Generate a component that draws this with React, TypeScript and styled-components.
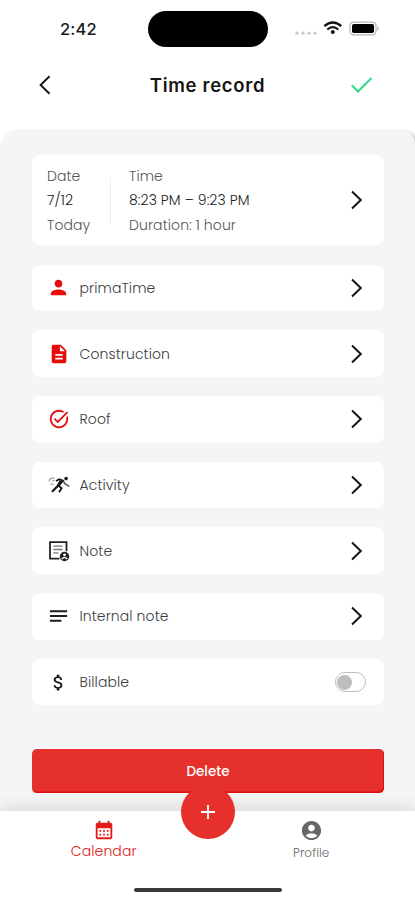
import React from 'react';
import styled, { createGlobalStyle } from 'styled-components';
import {
  MdAccountCircle,
  MdAttachMoney,
  MdCalendarMonth,
  MdDescription,
  MdNotes,
  MdPerson,
  MdTaskAlt,
} from 'react-icons/md';

const GlobalStyle = createGlobalStyle`
  * { box-sizing: border-box; }
  body { margin: 0; background: #fff; }
  button { font: inherit; border: 0; padding: 0; background: none; }
`;

const Screen = styled.div`
  width: 415px;
  height: 900px;
  display: flex;
  flex-direction: column;
  overflow: hidden;
  background: #fff;
  color: #4a4a4a;
  font-family: Poppins, Inter, sans-serif;
  font-size: 14px;
  font-weight: 300;
  letter-spacing: 0.1px;
`;

const StatusBar = styled.div`
  height: 58px;
  flex: none;
  display: grid;
  grid-template-columns: 148px 120px 1fr;
  align-items: center;
`;

const Clock = styled.span`
  padding-left: 60px;
  font-family: Inter, sans-serif;
  font-size: 16.5px;
  font-weight: 500;
  letter-spacing: 0.2px;
  color: #1a1a1a;
`;

const Island = styled.div`
  height: 36px;
  border-radius: 18px;
  background: #000;
`;

const StatusIcons = styled.div`
  display: flex;
  padding-left: 26px;
`;

const Header = styled.header`
  height: 71px;
  flex: none;
  display: grid;
  grid-template-columns: 90px 1fr 90px;
  align-items: start;
  padding-top: 14px;
`;

const HeaderButton = styled.button<{ $left: number }>`
  height: 26px;
  padding-left: ${(p) => p.$left}px;
  display: flex;
  align-items: center;
`;

const Title = styled.h1`
  margin: 0;
  text-align: center;
  font-family: Inter, sans-serif;
  font-size: 18.5px;
  line-height: 27px;
  font-weight: 600;
  letter-spacing: 0.7px;
  color: #151515;
  white-space: nowrap;
`;

const Panel = styled.main`
  height: 682px;
  flex: none;
  padding: 26px 31px 0 32px;
  border-radius: 20px 15px 0 0;
  background: #f5f5f5;
  box-shadow: 4px 4px 5px rgba(0, 0, 0, 0.35);
  clip-path: inset(0 0 0 0);
`;

const Card = styled.section`
  border-radius: 8px;
  background: #fff;
  display: flex;
  align-items: center;
`;

const DateCard = styled(Card)`
  height: 90px;
  padding: 0 19px 0 15px;
  margin-bottom: 19.5px;
`;

const Column = styled.div<{ $width?: number }>`
  width: ${(p) => (p.$width ? `${p.$width}px` : 'auto')};
  padding-top: 1px;
  line-height: 24.3px;
  white-space: nowrap;
`;

const Divider = styled.div`
  width: 1px;
  height: 47px;
  margin-right: 18px;
  background: #ededed;
`;

const Line = styled.div<{ $strong?: boolean }>`
  color: ${(p) => (p.$strong ? '#222' : '#555')};
`;

const Rows = styled.div`
  display: flex;
  flex-direction: column;
  gap: 18.9px;
`;

const Row = styled(Card)`
  height: 46.8px;
  padding: 0 19px 0 15px;
`;

const RowIcon = styled.span<{ $red?: boolean }>`
  width: 23px;
  margin-right: 9.5px;
  display: flex;
  justify-content: center;
  color: ${(p) => (p.$red ? '#e60c0c' : '#1d1d1d')};
`;

const RowLabel = styled.span`
  padding-top: 1px;
  color: #3c3c3c;
`;

const Trailing = styled.span`
  margin-left: auto;
  display: flex;
`;

const Toggle = styled.span`
  width: 31px;
  height: 20px;
  margin-right: -1px;
  padding: 1px;
  display: flex;
  align-items: center;
  border: 1px solid #bdbdbd;
  border-radius: 10px;
`;

const Knob = styled.span`
  width: 15px;
  height: 15px;
  border-radius: 50%;
  background: #bdbdbd;
`;

const DeleteButton = styled.button`
  width: 352px;
  height: 44px;
  margin-top: 44px;
  padding-top: 1px;
  border-radius: 5px;
  background: #e6302b;
  box-shadow: inset -1px -1.5px 0 #dc1010;
  color: #fff;
  font-size: 13.5px;
  font-weight: 500;
`;

const TabBar = styled.nav`
  flex: 1;
  position: relative;
  display: grid;
  grid-template-columns: 1fr 1fr;
  align-content: start;
  background: #fff;
  box-shadow: 0 -3px 16px rgba(0, 0, 0, 0.12);
`;

const Tab = styled.div`
  display: flex;
  flex-direction: column;
  align-items: center;
  padding-top: 8px;
  color: #666;
`;

const ActiveTab = styled(Tab)`
  color: #e11a1a;
`;

const TabLabel = styled.span<{ $active?: boolean }>`
  margin-top: ${(p) => (p.$active ? 0 : 1)}px;
  font-size: ${(p) => (p.$active ? 14 : 12)}px;
  line-height: 20px;
  color: ${(p) => (p.$active ? '#e02020' : '#666')};
`;

/* The add button straddles the top edge of the tab bar. */
const AddButton = styled.button`
  position: absolute;
  left: 181px;
  top: -26.5px;
  width: 54px;
  height: 54px;
  border-radius: 50%;
  background: #e6302b;
  display: flex;
  align-items: center;
  justify-content: center;
`;

const HomeIndicator = styled.div`
  grid-column: 1 / -1;
  justify-self: center;
  width: 148px;
  height: 4px;
  margin-top: 25px;
  border-radius: 2px;
  background: #3a3a3a;
`;

const Chevron = () => (
  <svg width="16" height="20" viewBox="0 0 16 20" fill="none" stroke="#151515" strokeWidth="2">
    <path d="M3 1.5 11.8 10 3 18.5" />
  </svg>
);

const StatusGlyphs = () => (
  <svg width="88" height="20" viewBox="0 0 88 20">
    <g fill="#c8c8c8">
      <circle cx="3" cy="14.2" r="1.6" />
      <circle cx="9" cy="14.2" r="1.6" />
      <circle cx="15" cy="14.2" r="1.6" />
      <circle cx="21" cy="14.2" r="1.6" />
    </g>
    <g fill="none" stroke="#111" strokeWidth="2.2">
      <path d="M30.3 7.2Q38.8-.2 47.3 7.2" />
      <path d="M33.3 10.5Q38.8 5.8 44.3 10.5" />
    </g>
    <circle cx="38.8" cy="13.1" r="2" fill="#111" />
    <rect x="56" y="3.2" width="26" height="12.6" rx="3.6" fill="#fff" stroke="#b4b4b4" strokeWidth="1.2" />
    <rect x="58" y="5" width="22" height="9" rx="1.8" fill="#000" />
    <path d="M83.4 7.2q2.4 2.2 0 4.6z" fill="#aaa" />
  </svg>
);

const RunnerIcon = () => (
  <svg width="22" height="18" viewBox="0 0 22 18" fill="none">
    <path d="M6.7 2.4C3.7 1 .9 3.3 1.2 5.6M2.7 7.5q1.1 1.1 2.7.7M4.4 5l2.2-.7" stroke="#aaa" strokeWidth="1.4" />
    <circle cx="18.1" cy="2.6" r="1.8" fill="#151515" />
    <path d="M8 5 11.2 3.2 15 4.6 10.6 9.8 13.6 12.2 11 16.2" stroke="#151515" strokeWidth="1.8" />
    <path d="M12.8 4.6 9.2 10.6 4 15.8" stroke="#151515" strokeWidth="2.2" />
    <path d="M15.1 5 17.4 8.2l4 2.2" stroke="#555" strokeWidth="1.6" />
  </svg>
);

const NoteIcon = () => (
  <svg width="22" height="22" viewBox="0 0 22 22" fill="none">
    <path d="M11.5 18.7H2V2.2h16.5v9" stroke="#222" strokeWidth="1.8" />
    <path d="M5.3 6.2h9.2M5.3 9.5h9.2M5.3 12.8h5" stroke="#777" strokeWidth="1.3" />
    <circle cx="16.5" cy="16.5" r="4.7" fill="#222" />
    <circle cx="16.5" cy="14.8" r="1.4" fill="#fff" />
    <path d="M13.8 18.9q2.7-2.6 5.4 0" stroke="#fff" strokeWidth="1.4" />
  </svg>
);

type Entry = { label: string; icon: React.ReactNode; red?: boolean; toggle?: boolean };

const entries: Entry[] = [
  { label: 'primaTime', icon: <MdPerson size={23} />, red: true },
  { label: 'Construction', icon: <MdDescription size={22} />, red: true },
  { label: 'Roof', icon: <MdTaskAlt size={22} />, red: true },
  { label: 'Activity', icon: <RunnerIcon /> },
  { label: 'Note', icon: <NoteIcon /> },
  { label: 'Internal note', icon: <MdNotes size={24} /> },
  { label: 'Billable', icon: <MdAttachMoney size={21} />, toggle: true },
];

export default function App() {
  return (
    <Screen>
      <GlobalStyle />
      <StatusBar>
        <Clock>2:42</Clock>
        <Island />
        <StatusIcons>
          <StatusGlyphs />
        </StatusIcons>
      </StatusBar>
      <Header>
        <HeaderButton $left={38} aria-label="Back">
          <svg width="14" height="20" viewBox="0 0 14 20" fill="none" stroke="#151515" strokeWidth="1.9">
            <path d="M11.5 1.2 2.6 10l8.9 8.8" />
          </svg>
        </HeaderButton>
        <Title>Time record</Title>
        <HeaderButton $left={25} aria-label="Save">
          <svg width="24" height="18" viewBox="0 0 24 18" fill="none" stroke="#2bdc83" strokeWidth="2">
            <path d="M1.8 9.2 8 15.5 21.5 2" />
          </svg>
        </HeaderButton>
      </Header>
      <Panel>
        <DateCard>
          <Column $width={63}>
            <Line>Date</Line>
            <Line $strong>7/12</Line>
            <Line>Today</Line>
          </Column>
          <Divider />
          <Column>
            <Line>Time</Line>
            <Line $strong>8:23 PM – 9:23 PM</Line>
            <Line>Duration: 1 hour</Line>
          </Column>
          <Trailing>
            <Chevron />
          </Trailing>
        </DateCard>
        <Rows>
          {entries.map((entry) => (
            <Row key={entry.label}>
              <RowIcon $red={entry.red}>{entry.icon}</RowIcon>
              <RowLabel>{entry.label}</RowLabel>
              <Trailing>
                {entry.toggle ? (
                  <Toggle>
                    <Knob />
                  </Toggle>
                ) : (
                  <Chevron />
                )}
              </Trailing>
            </Row>
          ))}
        </Rows>
        <DeleteButton>Delete</DeleteButton>
      </Panel>
      <TabBar>
        <ActiveTab>
          <MdCalendarMonth size={22} />
          <TabLabel $active>Calendar</TabLabel>
        </ActiveTab>
        <Tab>
          <MdAccountCircle size={23} />
          <TabLabel>Profile</TabLabel>
        </Tab>
        <AddButton aria-label="Add">
          <svg width="16" height="16" viewBox="0 0 16 16" stroke="#fff" strokeWidth="1.8">
            <path d="M8 1v14M1 8h14" />
          </svg>
        </AddButton>
        <HomeIndicator />
      </TabBar>
    </Screen>
  );
}
